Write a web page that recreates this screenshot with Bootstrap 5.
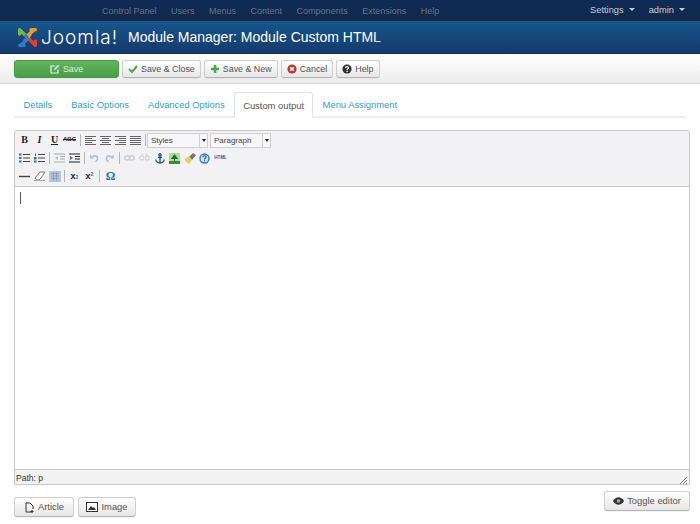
<!DOCTYPE html>
<html lang="en"><head><meta charset="utf-8"><title>Module Manager</title>
<link href="https://cdn.jsdelivr.net/npm/bootstrap@5.3.0/dist/css/bootstrap.min.css" rel="stylesheet">
<style>
html,body{height:524px;overflow:hidden;background:#fff}
body{font-family:"Liberation Sans",Arial,sans-serif;font-size:10px;color:#555;line-height:1.2}
.topbar{height:21px;background:linear-gradient(#0f2a55,#13294b);padding:0 15px 0 102px}
.topbar a{text-decoration:none;color:#62758b;font-size:9px;margin-right:14.500px}
.topbar .rightmenu a{color:#c5ccd5;font-size:9.300px;margin:0 0 0 14px}
.caretdown{display:inline-block;border:3px solid transparent;border-top-color:currentColor;border-bottom:0;margin-left:5px;vertical-align:2px}
.headbar{height:33px;background:linear-gradient(#17568c,#15396d);border-bottom:1px solid #10305c;padding-left:17px;color:#fff}
.brandtext{font-family:"Inter","Liberation Sans",sans-serif;font-size:19px;font-weight:300;width:90px;padding-left:3px;letter-spacing:1px;line-height:1}
.pagetitle{font-size:14px;margin:0;font-weight:400;color:#fff;line-height:1}
.toolrow{height:30px;background:linear-gradient(#fff,#ececec);border-bottom:1px solid #d9d9d9;padding:1px 14px 0;gap:3px}
.tbtn{font-size:8.900px;line-height:1;color:#555;background:linear-gradient(#fff,#e6e6e6);border:1px solid #cfcfcf;border-bottom-color:#b5b5b5;border-radius:3px;padding:0 5px;height:18px;display:inline-flex;align-items:center;gap:3px;box-shadow:0 1px 1px rgba(0,0,0,.05)}
.tbtn svg{flex:none}
.tbtn-go{width:105px;justify-content:center;background:linear-gradient(#62b45f,#4a9b4a);border-color:#4a994a;color:#dff0df;margin-right:0}
.tabrow{margin:8px 14px 0 14px;height:26px;border-bottom:2px solid #eee}
.tabrow a{display:block;font-size:9.400px;color:#2d9fd8;text-decoration:none;padding:7px 9.500px 0;height:26px}
.tabrow a.onetab{color:#555;background:#fff;border:1px solid #e4e4e4;border-bottom:0;border-radius:3px 3px 0 0;padding:7px 8px 0;margin:0 0 -1px 0}
.editorbox{margin:12px 10px 0 14px;height:355px;border:1px solid #c9c9c9;border-radius:3px 3px 0 0;display:flex;flex-direction:column}
.mcebar{height:56px;background:#f2f2f4;border-bottom:1px solid #c9c9c9;padding:0 0 0 2px;border-radius:3px 3px 0 0}
.mcerow{height:18px;gap:0}
.micon{width:15px;height:16px;display:flex;align-items:center;justify-content:center;font-size:9px;font-weight:700;color:#222;flex:none}
.micon.serif{font-family:"Liberation Serif",serif;font-size:10px}
.msep{width:1px;height:12px;background:#b5b5b5;margin:0 2px;flex:none}
.mselect{height:15px;background:#f7f7f9;border:1px solid #d0d0d4;display:flex;font-size:8px;color:#444;margin-right:2px;flex:none}
.mselect span{flex:1;padding:2px 3px;line-height:10px}
.mselect i{width:8px;border-left:1px solid #d0d0d4;display:flex;align-items:center;justify-content:center}
.mselect i::after{content:"";border:2px solid transparent;border-top:3px solid #222;border-bottom:0}
.editarea{flex:1;padding:5px 5px;background:#fff}
.cursorbar{width:1px;height:12px;background:#555;display:block}
.statusrow{height:15px;background:#f2f2f4;border-top:1px solid #c9c9c9;font-size:8.500px;color:#333;padding:3px 2px 0 1px}
.footrow{margin:6px 10px 0 14px;align-items:flex-start}
.footrow .tbtn{height:20px;padding:0 8px;font-size:9.400px;gap:3px}
.bl{margin-top:6px}
.gapfour{gap:4px}
.btn-art{width:60px;justify-content:center}
.btn-img{width:58px;justify-content:center}
.btn-tog{width:86px;justify-content:center}
.iconsx{width:15px}
.iconsx sub,.iconsx sup{font-size:5px;color:#2a6fb5}
.iconomega{color:#2a6fb5;font-size:12px!important;margin-left:1px}
.iconabc{font-size:6px}
.iconhtml{font-size:4.500px;color:#2a5fa5;width:17px}
.rowone-sep{margin:0 2px 0 3px}
.rowone-sepb{margin:0 1px 0 2px}
</style></head><body>
<nav class="topbar d-flex justify-content-between align-items-center">
 <div><a href="#">Control Panel</a><a href="#">Users</a><a href="#">Menus</a><a href="#">Content</a><a href="#">Components</a><a href="#">Extensions</a><a href="#">Help</a></div>
 <div class="rightmenu"><a href="#">Settings<span class="caretdown"></span></a><a href="#">admin<span class="caretdown"></span></a></div>
</nav>
<header class="headbar d-flex align-items-center">
 <svg width="21" height="21" viewBox="0 0 24 24" fill="none" stroke-width="3.800" stroke-linecap="round"><path d="M4 4 L9 9 Q12 12 15 9" stroke="#7ab648"/><path d="M3 3v5" stroke="#7ab648"/><path d="M19 4 L14 8 Q11 11 14 14" stroke="#f09a26"/><path d="M16 3h5" stroke="#f09a26"/><path d="M20 20 L15 15 Q12 12 9 15" stroke="#e2402f"/><path d="M21 16v5" stroke="#e2402f"/><path d="M5 20 L10 16 Q13 13 10 10" stroke="#2a7fc9"/><path d="M3 21h5" stroke="#2a7fc9"/></svg>
 <span class="brandtext">Joomla!</span>
 <h1 class="pagetitle">Module Manager: Module Custom HTML</h1>
</header>
<div class="toolrow d-flex align-items-center">
 <button class="tbtn tbtn-go"><svg width="10" height="10" viewBox="0 0 10 10" fill="none" stroke="#e8f4e8" stroke-width="1.200"><path d="M8 5.500V9H1V2h4"/><path d="M4 6l.4-1.600L8.200.8l1 1-3.600 3.700z" fill="#e8f4e8" stroke="none"/></svg>Save</button>
 <button class="tbtn"><svg width="10" height="10" viewBox="0 0 10 10" fill="none" stroke="#51a351" stroke-width="2"><path d="M1 5l3 3 5-6"/></svg>Save &amp; Close</button>
 <button class="tbtn"><svg width="10" height="10" viewBox="0 0 10 10" fill="none" stroke="#51a351" stroke-width="2.600"><path d="M5 1v8M1 5h8"/></svg>Save &amp; New</button>
 <button class="tbtn"><svg width="10" height="10" viewBox="0 0 10 10"><circle cx="5" cy="5" r="4.600" fill="#bd362f"/><path d="M3.200 3.200l3.600 3.600M6.800 3.200l-3.600 3.600" stroke="#fff" stroke-width="1.500"/></svg>Cancel</button>
 <button class="tbtn"><svg width="10" height="10" viewBox="0 0 10 10"><circle cx="5" cy="5" r="4.600" fill="#333"/><path d="M3.600 3.900c0-1.700 2.900-1.700 2.900 0 0 1-1.400 1-1.400 2.100" fill="none" stroke="#fff" stroke-width="1.200"/><rect x="4.500" y="6.800" width="1.300" height="1.200" fill="#fff"/></svg>Help</button>
</div>
<div class="tabrow d-flex">
 <a href="#">Details</a><a href="#">Basic Options</a><a href="#">Advanced Options</a><a href="#" class="onetab">Custom output</a><a href="#">Menu Assignment</a>
</div>
<div class="editorbox">
 <div class="mcebar">
  <div class="mcerow d-flex align-items-center">
   <span class="micon serif">B</span><span class="micon serif fst-italic">I</span><span class="micon serif text-decoration-underline">U</span><span class="micon iconabc text-decoration-line-through">ABC</span><span class="msep rowone-sep"></span>
   <span class="micon"><svg width="11" height="9"><path d="M0 .5h11M0 2.500h7M0 4.500h11M0 6.500h7M0 8.500h11" stroke="#666"/></svg></span>
   <span class="micon"><svg width="11" height="9"><path d="M0 .5h11M2 2.500h7M0 4.500h11M2 6.500h7M0 8.500h11" stroke="#666"/></svg></span>
   <span class="micon"><svg width="11" height="9"><path d="M0 .5h11M4 2.500h7M0 4.500h11M4 6.500h7M0 8.500h11" stroke="#666"/></svg></span>
   <span class="micon"><svg width="11" height="9"><path d="M0 .5h11M0 2.500h11M0 4.500h11M0 6.500h11M0 8.500h11" stroke="#666"/></svg></span>
   <span class="msep rowone-sepb"></span>
   <div class="mselect" style="width:61px"><span>Styles</span><i></i></div>
   <div class="mselect" style="width:61px"><span>Paragraph</span><i></i></div>
  </div>
  <div class="mcerow d-flex align-items-center">
   <span class="micon"><svg width="11" height="10"><path d="M4 1.500h7M4 5h7M4 8.500h7" stroke="#444"/><path d="M0 .5h2.500v2H0zM0 4h2.500v2H0zM0 7.500h2.500v2H0z" fill="#2a6fb5"/></svg></span>
   <span class="micon"><svg width="11" height="10"><path d="M4 1.500h7M4 5h7M4 8.500h7" stroke="#444"/><path d="M1 .5h1v2.500H1zM0 4h2.500v2.500H0zM0 7.500h2.500v2H0z" fill="#2a6fb5"/></svg></span>
   <span class="msep"></span>
   <span class="micon"><svg width="11" height="10" opacity=".4"><path d="M0 1h11M6 3.500h5M6 6h5M0 9h11" stroke="#444"/><path d="M4 3L1 5l3 2z" fill="#2a6fb5"/></svg></span>
   <span class="micon"><svg width="11" height="10"><path d="M0 1h11M6 3.500h5M6 6h5M0 9h11" stroke="#222" stroke-width="1.100"/><path d="M1 3l3 2-3 2z" fill="#2a6fb5"/></svg></span>
   <span class="msep"></span>
   <span class="micon"><svg width="11" height="10" fill="none" stroke="#a9c0dc" stroke-width="1.600"><path d="M3 4.500c3-3 6-1.500 5.500 2L6.500 9"/><path d="M1 1.500v4h4z" fill="#a9c0dc" stroke="none"/></svg></span>
   <span class="micon"><svg width="11" height="10" fill="none" stroke="#a9c0dc" stroke-width="1.600"><path d="M8 4.500c-3-3-6-1.500-5.500 2L4.500 9"/><path d="M10 1.500v4H6z" fill="#a9c0dc" stroke="none"/></svg></span>
   <span class="msep"></span>
   <span class="micon"><svg width="11" height="8" fill="none" stroke="#c8cdd4" stroke-width="1.300"><rect x=".7" y="2" width="5" height="4" rx="2"/><rect x="5.300" y="2" width="5" height="4" rx="2"/></svg></span>
   <span class="micon"><svg width="11" height="10" fill="none" stroke="#d4d8de" stroke-width="1.300"><rect x=".7" y="3" width="4" height="4" rx="2"/><rect x="6.300" y="3" width="4" height="4" rx="2"/><path d="M3 .5l1 2M8 .5l-1 2"/></svg></span>
   <span class="micon"><svg width="10" height="11" fill="none" stroke="#1e4f87" stroke-width="1.300"><circle cx="5" cy="1.800" r="1.100"/><path d="M5 3v7M3 4.500h4M.8 6.500c.3 2.500 2.500 3.500 4.200 3.500s3.900-1 4.200-3.500"/></svg></span>
   <span class="micon"><svg width="11" height="11"><rect width="11" height="11" fill="#a9dca4"/><path d="M0 8h11v3H0z" fill="#3c8b36"/><path d="M5.500 1L9 6H2z" fill="#1f6d24"/><rect x="5" y="6" width="1" height="3" fill="#6b4a1d"/></svg></span>
   <span class="micon"><svg width="12" height="11"><path d="M5 4l4-4 3 2-4 5z" fill="#777"/><path d="M1 6l4-3 3 4-3 4-4-3z" fill="#e9cf63"/></svg></span>
   <span class="micon"><svg width="11" height="11"><circle cx="5.500" cy="5.500" r="5.200" fill="#3a78c9"/><circle cx="5.500" cy="5.500" r="3.800" fill="#cfe1f7"/><path d="M3.900 4.300c0-2 3.200-2 3.200-.1 0 1.200-1.600 1-1.600 2.300" fill="none" stroke="#1e4f9a" stroke-width="1.100"/><rect x="5" y="7.300" width="1.100" height="1.100" fill="#1e4f9a"/></svg></span>
   <span class="micon iconhtml">HTML</span>
  </div>
  <div class="mcerow d-flex align-items-center">
   <span class="micon"><svg width="11" height="3"><path d="M0 1.500h11" stroke="#444" stroke-width="1.400"/></svg></span>
   <span class="micon"><svg width="12" height="10" fill="none" stroke="#777"><path d="M1 7l5-6h5L7 7 5 9H3z" fill="#fafafa"/><path d="M0 9.500h11" stroke="#aaa"/></svg></span>
   <span class="micon"><svg width="12" height="11"><rect width="12" height="11" fill="#b5c7dd"/><path d="M2 2.500h8M2 5h8M2 7.500h8M4.500 1v9M7.500 1v9" stroke="#7a90ab" stroke-width=".6"/></svg></span>
   <span class="msep"></span>
   <span class="micon iconsx">x<sub>2</sub></span>
   <span class="micon iconsx">x<sup>2</sup></span>
   <span class="msep"></span>
   <span class="micon serif iconomega">Ω</span>
  </div>
 </div>
 <div class="editarea"><span class="cursorbar"></span></div>
 <div class="statusrow d-flex justify-content-between">
  <span>Path: p</span>
  <svg width="8" height="8" class="align-self-end" stroke="#777"><path d="M1 8l7-7M4 8l4-4M7 8l1-1"/></svg>
 </div>
</div>
<div class="footrow d-flex justify-content-between">
 <div class="d-flex gapfour bl">
  <button class="tbtn btn-art"><svg width="11" height="11" fill="none" stroke="#333"><path d="M2 1h4l3 3v3M2 1v9h5"/><path d="M8 8v3M6.500 9.500h3" stroke-width="1.200"/></svg>Article</button>
  <button class="tbtn btn-img"><svg width="12" height="10"><rect x=".5" y=".5" width="11" height="9" fill="#fff" stroke="#333"/><path d="M2 8l3-4 2 2 1-1 2 3z" fill="#333"/></svg>Image</button>
 </div>
 <button class="tbtn btn-tog"><svg width="11" height="8"><path d="M0 4c3-5 8-5 11 0-3 5-8 5-11 0z" fill="#333"/><circle cx="5.500" cy="4" r="1.800" fill="#aaa"/></svg>Toggle editor</button>
</div>
</body></html>
